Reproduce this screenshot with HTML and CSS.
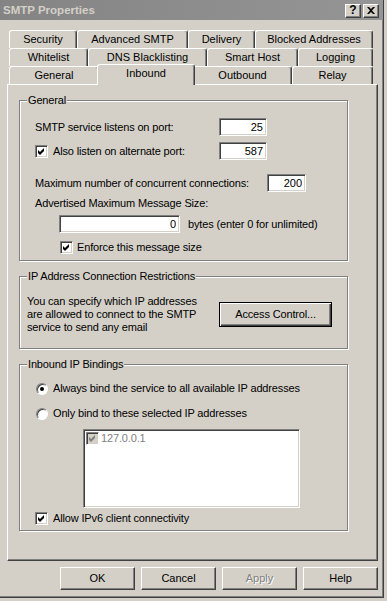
FILE: index.html
```html
<!DOCTYPE html>
<html>
<head>
	<meta charset="utf-8">
	<title>SMTP Properties</title>
	<link rel="stylesheet" href="styles.css">
</head>
<body>
<div class="window">
	<div class="titlebar">
		<span class="title">SMTP Properties</span>
		<span class="caption-btn">?</span>
		<span class="caption-btn close">
			<svg width="8" height="7" viewBox="0 0 8 7"><path d="M0 0h2l2 2 2-2h2l-3 3.5 3 3.5h-2l-2-2-2 2h-2l3-3.5z" fill="#000"/></svg>
		</span>
	</div>

	<div class="client">
		<div class="tabs">
			<div class="tabrow">
				<div class="tab t-security">Security</div>
				<div class="tab t-advanced">Advanced SMTP</div>
				<div class="tab t-delivery">Delivery</div>
				<div class="tab t-blocked">Blocked Addresses</div>
			</div>
			<div class="tabrow">
				<div class="tab t-whitelist">Whitelist</div>
				<div class="tab t-dns">DNS Blacklisting</div>
				<div class="tab t-smarthost">Smart Host</div>
				<div class="tab t-logging">Logging</div>
			</div>
			<div class="tabrow">
				<div class="tab t-general">General</div>
				<div class="tab t-inbound selected">Inbound</div>
				<div class="tab t-outbound">Outbound</div>
				<div class="tab t-relay">Relay</div>
			</div>
		</div>

		<div class="panel">
			<!-- General -->
			<div class="group">
				<div class="group-title">General</div>
				<div class="row gen-port">
					<span class="lbl w-port">SMTP service listens on port:</span>
					<input class="field port" type="text" value="25">
				</div>
				<div class="row gen-alt">
					<span class="check"><svg width="11" height="11" viewBox="0 0 11 11"><path d="M2 4L4 6L8 2L8 5L4 9L2 7Z"/></svg></span>
					<span class="lbl w-alt">Also listen on alternate port:</span>
					<input class="field port" type="text" value="587">
				</div>
				<div class="row gen-max">
					<span class="lbl w-max">Maximum number of concurrent connections:</span>
					<input class="field conn" type="text" value="200">
				</div>
				<div class="row gen-size">
					<span class="lbl">Advertised Maximum Message Size:</span>
				</div>
				<div class="row gen-bytes">
					<input class="field bytes" type="text" value="0">
					<span class="lbl hint">bytes (enter 0 for unlimited)</span>
				</div>
				<div class="row gen-enforce">
					<span class="check"><svg width="11" height="11" viewBox="0 0 11 11"><path d="M2 4L4 6L8 2L8 5L4 9L2 7Z"/></svg></span>
					<span class="lbl">Enforce this message size</span>
				</div>
			</div>

			<!-- IP restrictions -->
			<div class="group">
				<div class="group-title">IP Address Connection Restrictions</div>
				<div class="row ip-row">
					<p class="ip-text">You can specify which IP addresses<br>are allowed to connect to the SMTP<br>service to send any email</p>
					<span class="btn default access">Access Control...</span>
				</div>
			</div>

			<!-- Bindings -->
			<div class="group">
				<div class="group-title">Inbound IP Bindings</div>
				<div class="row bind-all">
					<span class="radio on"></span>
					<span class="lbl">Always bind the service to all available IP addresses</span>
				</div>
				<div class="row bind-sel">
					<span class="radio"></span>
					<span class="lbl">Only bind to these selected IP addresses</span>
				</div>
				<div class="row bind-list">
					<div class="listbox">
						<div class="list-item">
							<span class="check disabled"><svg width="11" height="11" viewBox="0 0 11 11"><path d="M2 4L4 6L8 2L8 5L4 9L2 7Z"/></svg></span>
							<span class="item-text">127.0.0.1</span>
						</div>
					</div>
				</div>
				<div class="row bind-ipv6">
					<span class="check"><svg width="11" height="11" viewBox="0 0 11 11"><path d="M2 4L4 6L8 2L8 5L4 9L2 7Z"/></svg></span>
					<span class="lbl">Allow IPv6 client connectivity</span>
				</div>
			</div>
		</div>

		<div class="buttons">
			<span class="btn">OK</span>
			<span class="btn">Cancel</span>
			<span class="btn disabled">Apply</span>
			<span class="btn">Help</span>
		</div>
	</div>
</div>
</body>
</html>
```

FILE: styles.css
```css
body {
	margin: 0;
	background-color: #d4d0c8;
	color: #000;
	font-family: "Liberation Sans", Arial, sans-serif;
	font-size: 11px;
	line-height: 13px;
}

.window {
	box-sizing: border-box;
	width: 384px;
	height: 598px;
	border-right: 1px solid #404040;
	border-bottom: 1px solid #404040;
	box-shadow: inset -1px -1px #808080;
}

/* title bar */
.titlebar {
	display: flex;
	align-items: center;
	height: 20px;
	padding: 1px 4px 0 3px;
	box-sizing: border-box;
	background: linear-gradient(to right, #848484, #959595);
}

.title {
	flex: 1;
	color: #d4d0c8;
	font-weight: bold;
	font-size: 11.5px;
}

.caption-btn {
	box-sizing: border-box;
	display: flex;
	align-items: center;
	justify-content: center;
	width: 16px;
	height: 14px;
	border: 1px solid;
	border-color: #fff #404040 #404040 #fff;
	box-shadow: inset -1px -1px #808080;
	background: #d4d0c8;
	font-weight: bold;
	font-size: 12px;
}

.caption-btn.close {
	margin-left: 2px;
}

.caption-btn svg {
	display: block;
}

/* tabs */
.client {
	width: 371px;
	padding: 10px 0 0 7px;
}

.tabs {
	margin-left: 2px;
}

.tabrow {
	display: flex;
	height: 18px;
}

.tab {
	box-sizing: border-box;
	height: 18px;
	border-top: 1px solid #fff;
	border-left: 1px solid #fff;
	border-right: 1px solid #404040;
	border-radius: 3px 3px 0 0;
	box-shadow: inset -1px 0 #808080;
	background: #d4d0c8;
	text-align: center;
	line-height: 16px;
	white-space: nowrap;
}

.tab.selected {
	position: relative;
	z-index: 1;
	height: 21px;
	margin: -2px -2px 0;
}

.t-security { width: 68px; }
.t-advanced { width: 111px; }
.t-delivery { width: 67px; }
.t-blocked { width: 118px; }
.t-whitelist { width: 79px; }
.t-dns { width: 119px; }
.t-smarthost { width: 91px; }
.t-logging { width: 75px; }
.t-general { width: 90px; }
.t-inbound { width: 98px; }
.t-outbound { width: 99px; }
.t-relay { width: 81px; }

/* panel & groups */
.panel {
	box-sizing: border-box;
	height: 477px;
	padding: 15px 0 0 11px;
	border: 1px solid;
	border-color: #fff #404040 #404040 #fff;
	box-shadow: inset -1px -1px #808080;
	letter-spacing: -0.15px;
}

.group {
	box-sizing: border-box;
	width: 329px;
	margin-bottom: 15px;
	border: 1px solid #808080;
	box-shadow: inset 1px 1px #fff, 1px 1px #fff;
}

.group-title {
	width: fit-content;
	margin: -7px 0 0 7px;
	padding: 0 1px;
	background: #d4d0c8;
}

.row {
	display: flex;
	align-items: center;
	padding-left: 15px;
}

.lbl {
	white-space: nowrap;
}

.w-port { width: 184px; }
.w-alt { width: 166px; }
.w-max { width: 232px; }

.gen-port { margin-top: 11px; }
.gen-alt { margin-top: 6px; }
.gen-max { margin-top: 14px; }
.gen-size { margin-top: 5px; }
.gen-bytes { margin-top: 5px; padding-left: 39px; }
.gen-enforce { margin-top: 8px; padding-left: 40px; padding-bottom: 6px; }

.hint {
	margin-left: 8px;
}

.field {
	box-sizing: border-box;
	height: 18px;
	margin: 0;
	padding: 0 3px;
	border: 1px solid;
	border-color: #808080 #fff #fff #808080;
	box-shadow: inset 1px 1px #404040, inset -1px -1px #d4d0c8;
	background: #fff;
	font: inherit;
	color: #000;
	text-align: right;
	outline: none;
}

.port { width: 48px; }
.conn { width: 39px; }
.bytes { width: 121px; }

.check {
	box-sizing: border-box;
	flex: none;
	width: 13px;
	height: 13px;
	margin-right: 5px;
	border: 1px solid;
	border-color: #808080 #fff #fff #808080;
	box-shadow: inset 1px 1px #404040, inset -1px -1px #d4d0c8;
	background: #fff;
}

.gen-enforce .check {
	margin-right: 4px;
}

.check svg {
	display: block;
	fill: #000;
}

.check.disabled {
	background: #d4d0c8;
	margin-right: 2px;
}

.check.disabled svg {
	fill: #808080;
}

.radio {
	box-sizing: border-box;
	display: flex;
	align-items: center;
	justify-content: center;
	flex: none;
	width: 12px;
	height: 12px;
	margin: 0 5px 0 1px;
	border: 1px solid;
	border-color: #808080 #fff #fff #808080;
	border-radius: 50%;
	box-shadow: inset 1px 1px #404040;
	background: #fff;
}

.radio.on::after {
	content: "";
	width: 4px;
	height: 4px;
	border-radius: 50%;
	background: #000;
}

/* ip restrictions */
.ip-row {
	align-items: flex-start;
	margin-top: 12px;
	padding-left: 7px;
	padding-bottom: 14px;
}

.ip-text {
	width: 192px;
	margin: 0;
}

/* bindings */
.bind-all { margin-top: 11px; }
.bind-sel { margin-top: 12px; }
.bind-list { margin-top: 9px; padding-left: 63px; }
.bind-ipv6 { margin-top: 4px; padding-bottom: 5px; }

.listbox {
	box-sizing: border-box;
	width: 217px;
	height: 79px;
	padding: 1px;
	border: 1px solid;
	border-color: #808080 #fff #fff #808080;
	box-shadow: inset 1px 1px #404040, inset -1px -1px #d4d0c8;
	background: #fff;
}

.list-item {
	display: flex;
	align-items: center;
	padding: 1px 0 0 1px;
}

.item-text {
	color: #808080;
}

/* buttons */
.buttons {
	display: flex;
	justify-content: flex-end;
	gap: 6px;
	margin-top: 6px;
}

.btn {
	box-sizing: border-box;
	display: flex;
	flex: none;
	align-items: center;
	justify-content: center;
	width: 75px;
	height: 23px;
	border: 1px solid;
	border-color: #fff #404040 #404040 #fff;
	box-shadow: inset -1px -1px #808080;
	background: #d4d0c8;
	white-space: nowrap;
}

.btn.default {
	border-color: #000;
	box-shadow: inset 1px 1px #fff, inset -1px -1px #404040, inset -2px -2px #808080;
}

.btn.access {
	width: 113px;
	height: 25px;
	margin-top: 7px;
}

.btn.disabled {
	color: #808080;
	text-shadow: 1px 1px #fff;
}
```
